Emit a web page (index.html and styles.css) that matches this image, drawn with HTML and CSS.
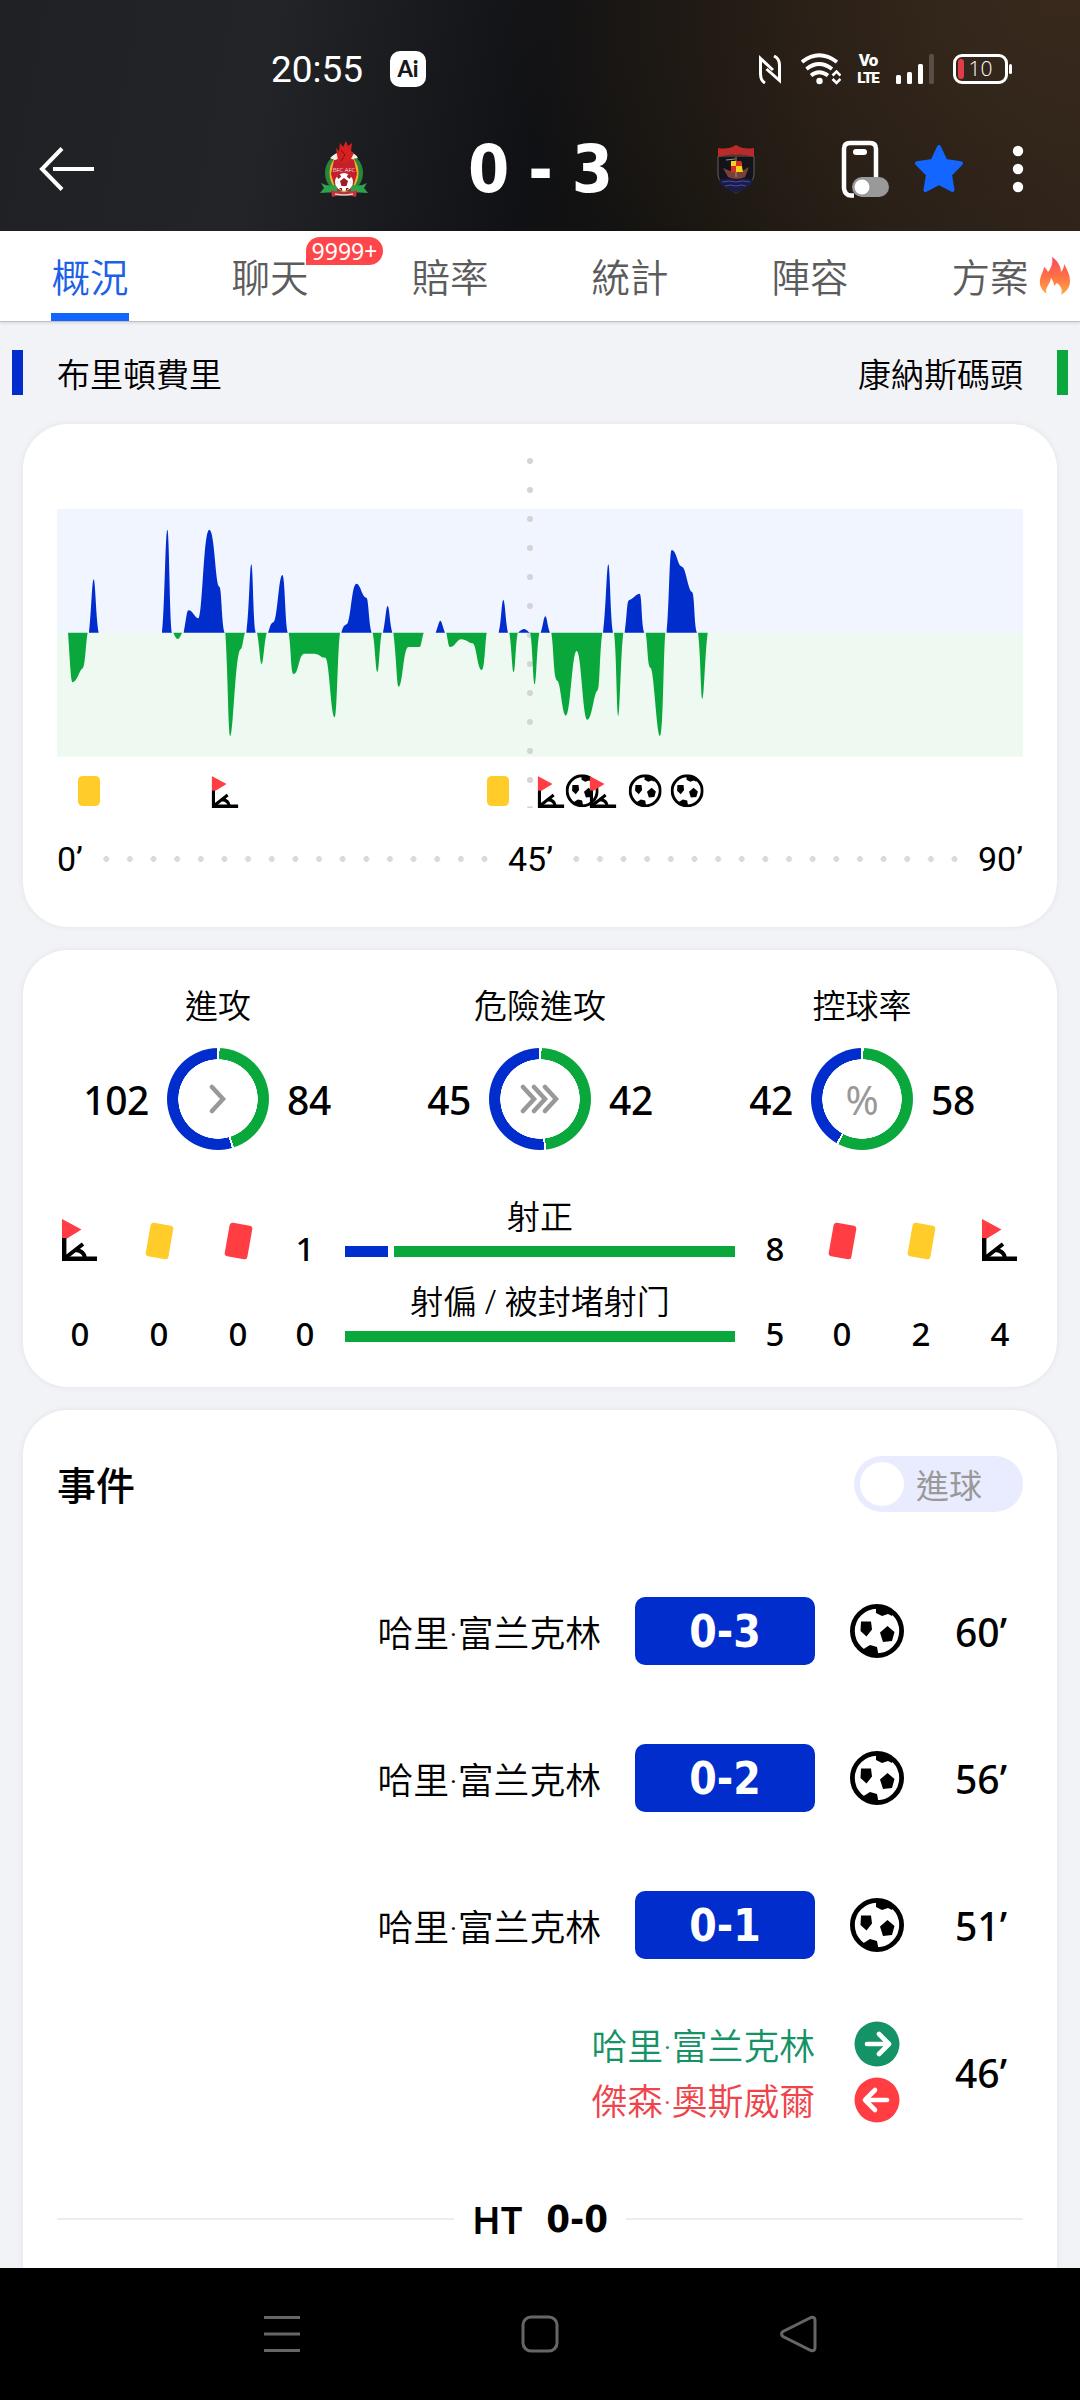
FILE: index.html
```html
<!DOCTYPE html>
<html lang="zh-Hant">
<head>
    <meta charset="UTF-8">
    <meta name="viewport" content="width=device-width, initial-scale=1.0">
    <title>布里頓費里 0 - 3 康納斯碼頭</title>
    <link rel="stylesheet" href="styles.css">
</head>
<body>
    <!-- shared icons -->
    <svg class="sprite">
        <symbol id="ball" viewBox="0 0 54 54">
            <circle cx="27" cy="27" r="24.6" fill="#fff" stroke="#000" stroke-width="4.8"/>
            <path d="M26 3v6l6 3 6-2 4 2 2-4-8-5zM11 17.500h10l1 8-5.500 7-6-5.500zM37.500 22l7 6-2.500 9-9 1-3-9.500zM12 46l8-5 7 2 1.500 8h-9z"/>
        </symbol>
        <symbol id="corner" viewBox="0 0 35 42">
            <path d="M0 0l19.500 10.500L5 19.500H0z" fill="#ff3d43"/>
            <path d="M2.200 19v20.700H35" fill="none" stroke="#000" stroke-width="4.400"/>
            <path d="M3 39L21 25M14 31q8 1 9 8" fill="none" stroke="#000" stroke-width="4"/>
        </symbol>
    </svg>

    <header class="header">
        <div class="status">
            <span class="clock">20:55</span>
            <span class="ai">Ai</span>
            <div class="status-icons">
                <svg class="nfc" width="22" height="29" viewBox="0 0 22 29" fill="none" stroke="#fff" stroke-width="3">
                    <path d="M6 28C2.500 26 1.500 23 1.500 19V3.500L14 15M15 1c4 2 5.500 5 5.500 9v15.500L7.500 14"/>
                </svg>
                <svg class="wifi" width="40" height="32" viewBox="0 0 40 32" fill="none" stroke="#fff" stroke-width="3.800">
                    <path d="M1 9Q18-4.500 36 9M5.500 16Q18 6 31 16M10 22.500Q18 16 27 22.500"/>
                    <circle cx="18.500" cy="28" r="3.200" fill="#fff" stroke="none"/>
                    <path d="M31.500 22.500l4-4 4 4M31.500 26l4 4 4-4" stroke-width="2.600"/>
                </svg>
                <div class="volte"><span>Vo</span><span>LTE</span></div>
                <svg class="signal" width="39" height="30" viewBox="0 0 39 30" fill="#fff">
                    <rect y="21" width="5" height="9" rx="1.500"/>
                    <rect x="11" y="18" width="5" height="12" rx="1.500"/>
                    <rect x="22" y="10" width="5" height="20" rx="1.500"/>
                    <rect x="33" width="5" height="30" rx="1.500" fill="#5b4e46"/>
                </svg>
                <div class="battery"><i></i>10</div>
            </div>
        </div>
        <div class="titlebar">
            <svg class="back" width="56" height="44" viewBox="0 0 56 44" fill="none" stroke="#fff" stroke-width="4">
                <path d="M23 1.500L3 22l20 20.500M14 22h41"/>
            </svg>
            <svg class="crest-home" width="48" height="58" viewBox="0 0 48 58">
                <ellipse cx="24" cy="33" rx="19" ry="20" fill="#27863d"/>
                <ellipse cx="24" cy="33" rx="14.500" ry="19" fill="#f5b324"/>
                <path d="M14 20q10-6 20 0l3 14-5 17H16l-5-17z" fill="#c2202c"/>
                <path d="M10 18q8-8 13-4l3 0q8-3 12 4l-6 1-8-2-9 3z" fill="#f5eee8"/>
                <path d="M16 8l3 3 1-8 3 4 3-6 2 5 4-3-1 8 3 2-4 8-6 3-6-3z" fill="#d4211f"/>
                <path d="M21 10l4 5-4 6" fill="none" stroke="#7a1115"/>
                <text x="24" y="32" text-anchor="middle" font-size="6" fill="#fff">BFC AFC</text>
                <path d="M0 53l4-5-3-5q10 5 16 0v9zM48 53l-4-5 3-5q-10 5-16 0v9z" fill="#2fa04b"/>
                <circle cx="24" cy="42" r="9" fill="#fff"/>
                <path d="M24 38l4 3-1.500 5h-5L20 41zM17 36l3-2 1 3-3 2zM31 36l-3-2-1 3 3 2zM19 48l3 0 0 3zM29 48l-3 0 0 3z" fill="#a01c26"/>
                <path d="M11 50q13 5 26 0l-1 7q-12-4-24 0z" fill="#c9303b"/>
                <path d="M15 54q9 2 18 0" fill="none" stroke="#f3c9c9" stroke-width="1.500"/>
            </svg>
            <div class="score"><span>0</span><span>-</span><span>3</span></div>
            <svg class="crest-away" width="38" height="49" viewBox="0 0 38 49">
                <path d="M1 11v18c0 9 10 14 18 19 8-5 18-10 18-19V11z" fill="#15131a" stroke="#65615e"/>
                <path d="M1 35q9-3 18 0 9-3 18 0-3 8-18 13Q4 43 1 35z" fill="#1c1c48"/>
                <path d="M5 37q7-2 14 0 7-2 14 0M8 41q6-2 11 0 5-2 10 0" fill="none" stroke="#4a4f9f"/>
                <path d="M1 3q10 2 18-3 8 5 18 3v9q-10-3-18-2Q11 9 1 12z" fill="#bb2a28"/>
                <path d="M6 23l7 3h12l7-4-4 10q-9 4-17 0z" fill="#7a4038"/>
                <path d="M19 12v20M9 15l9-1" stroke="#a08d7c"/>
                <path d="M14 16l10 0 2 11H14z" fill="#f5d21c"/>
                <path d="M19 16h5l1 5h-6zM14 21h5v6h-5z" fill="#d92c22"/>
            </svg>
            <svg class="pip" width="49" height="58" viewBox="0 0 49 58">
                <path d="M13 55.500H10q-6 0-7-7V9q0-6 6-6h20q6 0 6 6v29" fill="none" stroke="#fff" stroke-width="4.500"/>
                <rect x="12" y="9" width="14" height="6" rx="3" fill="#fff"/>
                <rect x="11" y="37" width="37" height="20" rx="10" fill="#999"/>
                <circle cx="21" cy="47" r="7.500" fill="#fff"/>
            </svg>
            <svg class="star" width="50" height="50" viewBox="0 0 50 50">
                <path d="M25 3l6.500 14L47 19.300 36 30.500 38.500 46 25 39 11.500 46 14 30.500 3 19.300 18.500 17z" fill="#1366ff" stroke="#1366ff" stroke-width="4" stroke-linejoin="round"/>
            </svg>
            <svg class="more" width="12" height="48" viewBox="0 0 12 48" fill="#fff">
                <circle cx="6" cy="6" r="5.200"/><circle cx="6" cy="24" r="5.200"/><circle cx="6" cy="42" r="5.200"/>
            </svg>
        </div>
    </header>

    <nav class="tabs">
        <a class="tab active">概況</a>
        <a class="tab">聊天<span class="badge">9999+</span></a>
        <a class="tab">賠率</a>
        <a class="tab">統計</a>
        <a class="tab">陣容</a>
        <a class="tab">方案
            <svg class="flame" width="32" height="40" viewBox="0 0 32 40">
                <defs>
                    <linearGradient id="fire" x1="0" y1="0" x2="0" y2="1">
                        <stop offset="0" stop-color="#fb4b5c"/>
                        <stop offset="0.500" stop-color="#ff6f45"/>
                        <stop offset="1" stop-color="#ffab45"/>
                    </linearGradient>
                </defs>
                <path d="M10 39C4 36 0 31 1 24c1-6 3-7 4-13 2 1 3 3 4 5 4-5 5-10 4-15 5 3 9 9 9 15 2-2 3-5 3-8 3 5 6 11 6 17 0 7-4 11-9 14 2-5 0-9-4-12l-3 3c0-3-1-5-3-8-1 6-5 9-5 13 0 2 1 3 3 4z" fill="url(#fire)"/>
            </svg>
        </a>
    </nav>

    <main class="content">
        <div class="teams">
            <span class="mark home"></span>
            <span>布里頓費里</span>
            <span class="team-away">康納斯碼頭</span>
            <span class="mark away"></span>
        </div>

        <section class="card momentum">
            <svg class="chart" width="966" height="360" viewBox="51 30 2898 1080">
                <rect x="51" y="207" width="2898" height="371" fill="#f0f5ff"/>
                <rect x="51" y="578" width="2898" height="372" fill="#eef9f1"/>
                <path d="M1470 63V1040" stroke="#d4d4d6" stroke-width="18" stroke-linecap="round" stroke-dasharray="0 87"/>
                <rect x="1462" y="1099" width="16" height="5" fill="#d4d4d6"/>
                <g fill="#002dcc">
                    <path d="M147 578C154 520 156 418 161 418S168 540 176 578z"/>
                    <path d="M366 578C374 520 376 269 382 269S389 545 396 578z"/>
                    <path d="M431 578C440 530 440 511 446 511C458 511 465 535 475 535C488 535 490 269 508 269C524 269 526 440 538 440C545 440 545 560 554 578z"/>
                    <path d="M619 578C628 510 629 373 634 373S640 550 647 578z"/>
                    <path d="M684 578C690 565 690 550 700 547C712 545 716 405 727 405C735 405 735 550 743 578z"/>
                    <path d="M904 578C910 560 910 558 920 553C932 548 935 431 949 431C962 431 966 472 979 473C986 474 986 550 995 578z"/>
                    <path d="M1029 578C1036 550 1038 498 1043 498S1049 550 1057 578z"/>
                    <path d="M1187 578C1194 560 1197 542 1201 542S1208 560 1215 578z"/>
                    <path d="M1376 578C1384 550 1385 480 1390 480S1397 550 1404 578z"/>
                    <path d="M1434 578Q1446 567 1452 567T1468 578z"/>
                    <path d="M1502 578C1509 560 1511 529 1516 529S1522 560 1530 578z"/>
                    <path d="M1689 578C1698 510 1700 373 1705 373S1711 540 1719 578z"/>
                    <path d="M1754 578C1762 520 1760 481 1768 480C1778 478 1788 461 1799 461C1806 465 1804 560 1813 578z"/>
                    <path d="M1880 578C1888 500 1888 330 1895 330C1910 330 1912 378 1926 380C1938 382 1944 452 1956 456C1964 460 1962 560 1971 578z"/>
                </g>
                <g fill="#0aa83c">
                    <path d="M84 578C90 660 92 727 98 727C112 725 118 690 128 685C136 680 138 600 143 578z"/>
                    <path d="M400 578Q408 597 413 597T426 578z"/>
                    <path d="M556 578C564 700 565 888 571 888C580 888 586 632 602 628C608 624 610 590 615 578z"/>
                    <path d="M651 578C658 610 660 672 665 672S672 610 680 578z"/>
                    <path d="M746 578C754 630 752 702 761 702C776 702 776 642 793 641H822C840 641 840 653 856 653C868 655 872 832 884 832C892 832 892 640 900 578z"/>
                    <path d="M998 578C1005 610 1007 696 1012 696S1018 620 1025 578z"/>
                    <path d="M1060 578C1070 660 1070 740 1076 740C1088 740 1090 622 1105 621H1138C1144 621 1145 595 1151 578z"/>
                    <path d="M1219 578C1226 610 1224 621 1232 621C1245 621 1250 598 1264 598C1280 598 1286 610 1298 610C1310 615 1312 690 1325 690C1334 690 1335 610 1340 578z"/>
                    <path d="M1408 578C1415 620 1416 696 1421 696S1426 620 1433 578z"/>
                    <path d="M1471 578C1478 620 1479 733 1484 733S1490 620 1498 578z"/>
                    <path d="M1534 578C1542 630 1540 718 1552 722C1562 726 1566 827 1578 827C1592 827 1596 633 1610 633C1624 633 1628 839 1642 839C1656 839 1662 755 1672 752C1680 748 1678 640 1687 578z"/>
                    <path d="M1722 578C1730 640 1730 828 1735 828S1742 640 1750 578z"/>
                    <path d="M1817 578C1824 620 1822 680 1832 684C1842 690 1850 888 1860 888C1870 888 1870 640 1876 578z"/>
                    <path d="M1974 578C1982 640 1982 777 1987 777S1995 640 2003 578z"/>
                </g>
                <!-- timeline events -->
                <rect x="114" y="1008" width="66" height="90" rx="14" fill="#ffcc2a"/>
                <rect x="1341" y="1008" width="66" height="90" rx="14" fill="#ffcc2a"/>
                <use href="#corner" x="515" y="1008" width="80" height="96"/>
                <use href="#corner" x="1493" y="1008" width="80" height="96"/>
                <use href="#ball" x="1577" y="1003" width="99" height="99"/>
                <use href="#corner" x="1649" y="1008" width="80" height="96"/>
                <use href="#ball" x="1766" y="1003" width="99" height="99"/>
                <use href="#ball" x="1892" y="1003" width="99" height="99"/>
            </svg>
            <div class="axis">
                <span>0’</span>
                <i class="dots"></i>
                <span>45’</span>
                <i class="dots"></i>
                <span>90’</span>
            </div>
        </section>

        <section class="card stats">
            <div class="rings">
                <div class="ring-col">
                    <h4>進攻</h4>
                    <div class="ring-row">
                        <b>102</b>
                        <div class="ring" style="--away: 45.2%">
                            <svg width="18" height="30" viewBox="0 0 18 30"><path d="M3 3l11 12L3 27"/></svg>
                        </div>
                        <b>84</b>
                    </div>
                </div>
                <div class="ring-col">
                    <h4>危險進攻</h4>
                    <div class="ring-row">
                        <b>45</b>
                        <div class="ring" style="--away: 48.3%">
                            <svg width="40" height="30" viewBox="0 0 40 30"><path d="M3 3l11 12L3 27M14 3l11 12-11 12M25 3l11 12-11 12"/></svg>
                        </div>
                        <b>42</b>
                    </div>
                </div>
                <div class="ring-col">
                    <h4>控球率</h4>
                    <div class="ring-row">
                        <b>42</b>
                        <div class="ring" style="--away: 58%">%</div>
                        <b>58</b>
                    </div>
                </div>
            </div>

            <div class="counts">
                <svg class="flag"><use href="#corner"/></svg>
                <i class="tile yellow"></i>
                <i class="tile red"></i>
                <span class="num">1</span>
                <div class="shots">
                    <span>射正</span>
                    <div class="bar"><i class="h" style="width: 43px"></i><i class="a"></i></div>
                </div>
                <span class="num">8</span>
                <i class="tile red"></i>
                <i class="tile yellow"></i>
                <svg class="flag"><use href="#corner"/></svg>

                <span class="num">0</span>
                <span class="num">0</span>
                <span class="num">0</span>
                <span class="num">0</span>
                <div class="shots">
                    <span>射偏 / 被封堵射门</span>
                    <div class="bar"><i class="a"></i></div>
                </div>
                <span class="num">5</span>
                <span class="num">0</span>
                <span class="num">2</span>
                <span class="num">4</span>
            </div>
        </section>

        <section class="card events">
            <div class="events-head">
                <h3>事件</h3>
                <div class="switch"><i></i>進球</div>
            </div>
            <div class="goal">
                <span class="player">哈里·富兰克林</span>
                <span class="result">0-3</span>
                <svg class="ball"><use href="#ball"/></svg>
                <span class="minute">60’</span>
            </div>
            <div class="goal">
                <span class="player">哈里·富兰克林</span>
                <span class="result">0-2</span>
                <svg class="ball"><use href="#ball"/></svg>
                <span class="minute">56’</span>
            </div>
            <div class="goal">
                <span class="player">哈里·富兰克林</span>
                <span class="result">0-1</span>
                <svg class="ball"><use href="#ball"/></svg>
                <span class="minute">51’</span>
            </div>
            <div class="sub">
                <div class="sub-names">
                    <span class="in">哈里·富兰克林</span>
                    <span class="out">傑森·奧斯威爾</span>
                </div>
                <div class="sub-icons">
                    <svg width="46" height="46" viewBox="0 0 46 46">
                        <circle cx="23" cy="23" r="22.500" fill="#159266"/>
                        <path d="M13 23h21M25 13l10 10-10 10"/>
                    </svg>
                    <svg width="46" height="46" viewBox="0 0 46 46">
                        <circle cx="23" cy="23" r="22.500" fill="#ff3d43"/>
                        <path d="M33 23H12M21 13L11 23l10 10"/>
                    </svg>
                </div>
                <span class="minute">46’</span>
            </div>
            <div class="half">
                <span class="ht">HT</span>
                <span class="ht-score">0-0</span>
            </div>
        </section>
    </main>

    <footer class="navbar">
        <svg width="36" height="38" viewBox="0 0 36 38"><path d="M0 2.500h36M0 19h36M0 35.500h36"/></svg>
        <svg width="38" height="38" viewBox="0 0 38 38"><rect x="2" y="2" width="34" height="34" rx="8"/></svg>
        <svg width="38" height="38" viewBox="0 0 38 38"><path d="M32 2.500L4 16.500q-3 2.500 0 5L32 35.500q4 1 4-3v-27q0-4-4-3z"/></svg>
    </footer>
</body>
</html>
```

FILE: styles.css
```css
* {
    margin: 0;
    padding: 0;
    box-sizing: border-box;
}

body {
    width: 1080px;
    height: 2400px;
    overflow: hidden;
    display: flex;
    flex-direction: column;
    background-color: #f2f3f7;
    font-family: "Noto Sans", "Noto Sans CJK TC", sans-serif;
    font-size: 33px;
    font-weight: 350;
    color: #000;
}
svg {
    display: block;
    flex-shrink: 0;
}
.sprite {
    position: absolute;
    width: 0;
    height: 0;
}

/* header */
.header {
    height: 231px;
    flex-shrink: 0;
    color: #fff;
    background:
        radial-gradient(ellipse 560px 420px at 1060px 0, #38291c, rgba(56, 41, 28, 0)),
        linear-gradient(100deg, #202124 0%, #232427 25%, #101114 50%, #15130f 65%, #2a2019 100%);
}
.status {
    display: flex;
    align-items: center;
    height: 100px;
    padding: 38px 72px 0 271px;
}
.clock {
    width: 119px;
    font-family: Roboto, sans-serif;
    font-size: 37px;
    font-weight: 400;
}
.ai {
    width: 36px;
    height: 36px;
    border-radius: 10px;
    background-color: #fff;
    color: #17181b;
    font-family: Lato, sans-serif;
    font-size: 22px;
    font-weight: 900;
    line-height: 36px;
    text-align: center;
}
.status-icons {
    display: flex;
    align-items: center;
    margin-left: auto;
}
.wifi {
    margin-left: 20px;
}
.volte {
    display: flex;
    flex-direction: column;
    align-items: center;
    width: 24px;
    margin-left: 15px;
    font-family: Roboto, sans-serif;
    font-size: 15px;
    font-weight: 900;
    line-height: 18px;
    letter-spacing: -1px;
}
.volte span:first-child {
    font-size: 17px;
}
.signal {
    margin: 0 18px 0 16px;
}
.battery {
    position: relative;
    width: 55px;
    height: 30px;
    border: 3px solid #fff;
    border-radius: 9px;
    font-family: "Open Sans", sans-serif;
    font-size: 21px;
    line-height: 23px;
    text-align: center;
}
.battery i {
    position: absolute;
    left: 2px;
    top: 2px;
    width: 6px;
    height: 20px;
    border-radius: 3px;
    background-color: #e23c4b;
}
.battery::after {
    content: "";
    position: absolute;
    right: -7px;
    top: 7px;
    width: 3px;
    height: 10px;
    border-radius: 2px;
    background-color: #fff;
}
.titlebar {
    display: flex;
    align-items: center;
    height: 138px;
    padding-left: 39px;
}
.crest-home {
    margin-left: 225px;
}
.score {
    display: flex;
    justify-content: space-between;
    width: 145px;
    margin: 2px 0 0 100px;
    font-family: "DejaVu Sans Condensed", "DejaVu Sans", sans-serif;
    font-stretch: condensed;
    font-size: 66px;
    font-weight: bold;
    line-height: 66px;
}
.crest-away {
    margin-left: 104px;
}
.pip {
    margin-left: 86px;
}
.star {
    margin-left: 24px;
}
.more {
    margin-left: 48px;
}

/* tabs */
.tabs {
    display: flex;
    height: 91px;
    flex-shrink: 0;
    background-color: #fff;
    border-bottom: 1px solid #bfc1c8;
    box-shadow: 0 1px 3px rgba(0, 0, 0, 0.12);
}
.tab {
    position: relative;
    width: 180px;
    font-size: 38.5px;
    line-height: 92px;
    text-align: center;
    white-space: nowrap;
    color: #5c5c5c;
}
.tab.active {
    color: #1c60e8;
}
.tab.active::after {
    content: "";
    position: absolute;
    left: 51px;
    bottom: 0;
    width: 78px;
    height: 8px;
    background-color: #1464ff;
}
.badge {
    position: absolute;
    left: 126px;
    top: 6px;
    width: 77px;
    height: 28px;
    border-radius: 14px 14px 14px 0;
    background-color: #ff464b;
    color: #fff;
    font-size: 23px;
    font-weight: 400;
    line-height: 29px;
}
.flame {
    position: absolute;
    left: 139px;
    top: 25px;
}

/* teams */
.content {
    flex: 1;
    min-height: 0;
    overflow: hidden;
}
.teams {
    display: flex;
    align-items: center;
    height: 102px;
    padding: 0 12px 1px;
}
.mark {
    width: 11px;
    height: 45px;
    margin-right: 34px;
}
.mark.home {
    background-color: #002dcc;
}
.mark.away {
    margin: 0 0 0 34px;
    background-color: #0aa83c;
}
.team-away {
    margin-left: auto;
}

/* cards */
.card {
    margin: 0 23px 23px;
    padding: 0 34px;
    border-radius: 45px;
    background-color: #fff;
    box-shadow: 0 0 6px rgba(0, 0, 0, 0.07);
}
.momentum {
    height: 503px;
    padding-top: 26px;
}
.axis {
    display: flex;
    align-items: center;
    height: 50px;
    margin-top: 24px;
    font-family: Roboto, sans-serif;
    font-size: 34px;
    font-weight: 400;
}
.dots {
    flex: 1;
    height: 6px;
    margin: 0 12px;
    background: radial-gradient(circle, #dadada 2.8px, transparent 3.2px) center / 22.55px 6px space;
}

/* statistics */
.stats {
    height: 437px;
    padding-top: 32px;
}
.rings {
    display: flex;
}
.ring-col {
    width: 322px;
    text-align: center;
}
.ring-col h4 {
    font-size: 33px;
    font-weight: 350;
    line-height: 48px;
}
.ring-row {
    display: grid;
    grid-template-columns: 1fr 102px 1fr;
    gap: 18px;
    align-items: center;
    margin-top: 18px;
    font-size: 39px;
}
.ring-row b {
    font-weight: 550;
    letter-spacing: -0.4px;
    text-align: left;
}
.ring-row b:first-child {
    text-align: right;
}
.ring {
    position: relative;
    display: flex;
    align-items: center;
    justify-content: center;
    height: 102px;
    border-radius: 50%;
    color: #999;
    font-size: 40px;
    font-weight: 400;
    background:
        radial-gradient(circle, #fff 39.5px, transparent 40px),
        conic-gradient(#fff 0.5%, #0aa83c 0.5% calc(var(--away) - 0.3%), #fff calc(var(--away) - 0.3%) calc(var(--away) + 0.4%), #002dcc calc(var(--away) + 0.4%) 99.8%, #fff 99.8%);
}
.ring path {
    fill: none;
    stroke: #999;
    stroke-width: 4.5;
    stroke-linecap: round;
}
.counts {
    display: grid;
    grid-template-columns: 79px 79px 79px 55px 415px 55px 79px 79px 79px;
    grid-template-rows: 85px 85px;
    justify-items: center;
    margin: 29px -16.5px 0;
}
.flag {
    width: 35px;
    height: 42px;
    margin: 40px 1px 0 0;
}
.tile {
    width: 23px;
    height: 34px;
    margin-top: 45px;
    border-radius: 3px;
    transform: rotate(10deg);
}
.yellow {
    background-color: #ffcc2a;
}
.red {
    background-color: #ff3d43;
}
.num {
    align-self: end;
    font-size: 33px;
    font-weight: 500;
    line-height: 30px;
}
.shots {
    display: flex;
    flex-direction: column;
    justify-content: flex-end;
    align-items: center;
    width: 390px;
    padding-bottom: 7px;
    line-height: 48px;
}
.bar {
    display: flex;
    gap: 6px;
    width: 100%;
    height: 11px;
    margin-top: 5px;
}
.bar .h {
    background-color: #002dcc;
}
.bar .a {
    flex: 1;
    background-color: #0aa83c;
}

/* events */
.events {
    height: 980px;
    padding-top: 46px;
}
.events-head {
    display: flex;
    align-items: center;
    justify-content: space-between;
    height: 56px;
    margin-bottom: 85px;
}
.events-head h3 {
    margin-top: -2px;
    font-size: 39px;
    font-weight: 500;
}
.switch {
    display: flex;
    align-items: center;
    gap: 12px;
    width: 169px;
    height: 56px;
    padding-left: 6px;
    border-radius: 28px;
    background-color: #e9ecff;
    color: #999;
    font-weight: 400;
}
.switch i {
    width: 44px;
    height: 44px;
    border-radius: 50%;
    background-color: #fff;
}
.goal {
    display: flex;
    align-items: center;
    justify-content: flex-end;
    height: 68px;
    margin-bottom: 79px;
}
.player, .sub-names {
    font-family: Roboto, "Noto Sans CJK TC", sans-serif;
    font-size: 35.8px;
}
.result {
    width: 180px;
    height: 68px;
    margin: 0 35px 0 34px;
    border-radius: 10px;
    background-color: #002dcc;
    color: #fff;
    font-family: "DejaVu Sans Condensed", "DejaVu Sans", sans-serif;
    font-stretch: condensed;
    font-size: 44px;
    font-weight: bold;
    line-height: 69px;
    text-align: center;
}
.ball {
    width: 54px;
    height: 54px;
}
.minute {
    width: 84px;
    margin-left: 35px;
    font-size: 39px;
    font-weight: 500;
    text-align: center;
}
.sub {
    display: flex;
    align-items: center;
    justify-content: flex-end;
    height: 104px;
    margin-top: -18px;
}
.sub-names {
    display: flex;
    flex-direction: column;
    padding-top: 7px;
    line-height: 55px;
}
.in {
    color: #159266;
}
.out {
    color: #f0444b;
}
.sub-icons {
    display: flex;
    flex-direction: column;
    gap: 10px;
    margin: 0 4px 0 39px;
}
.sub-icons path {
    fill: none;
    stroke: #fff;
    stroke-width: 4.6;
    stroke-linecap: round;
    stroke-linejoin: round;
}
.half {
    display: flex;
    align-items: center;
    height: 50px;
    margin-top: 70px;
}
.half::before, .half::after {
    content: "";
    flex: 1;
    height: 2px;
    background-color: #ededed;
}
.ht {
    margin: 0 24px 0 18px;
    font-size: 38px;
    font-weight: 600;
}
.ht-score {
    margin-right: 18px;
    font-family: "DejaVu Sans Condensed", "DejaVu Sans", sans-serif;
    font-stretch: condensed;
    font-size: 38px;
    font-weight: bold;
}

/* android navigation */
.navbar {
    display: flex;
    justify-content: space-between;
    height: 132px;
    flex-shrink: 0;
    padding: 47px 263px 0 264px;
    background-color: #000;
}
.navbar svg {
    fill: none;
    stroke: #666;
    stroke-width: 3;
}
```
